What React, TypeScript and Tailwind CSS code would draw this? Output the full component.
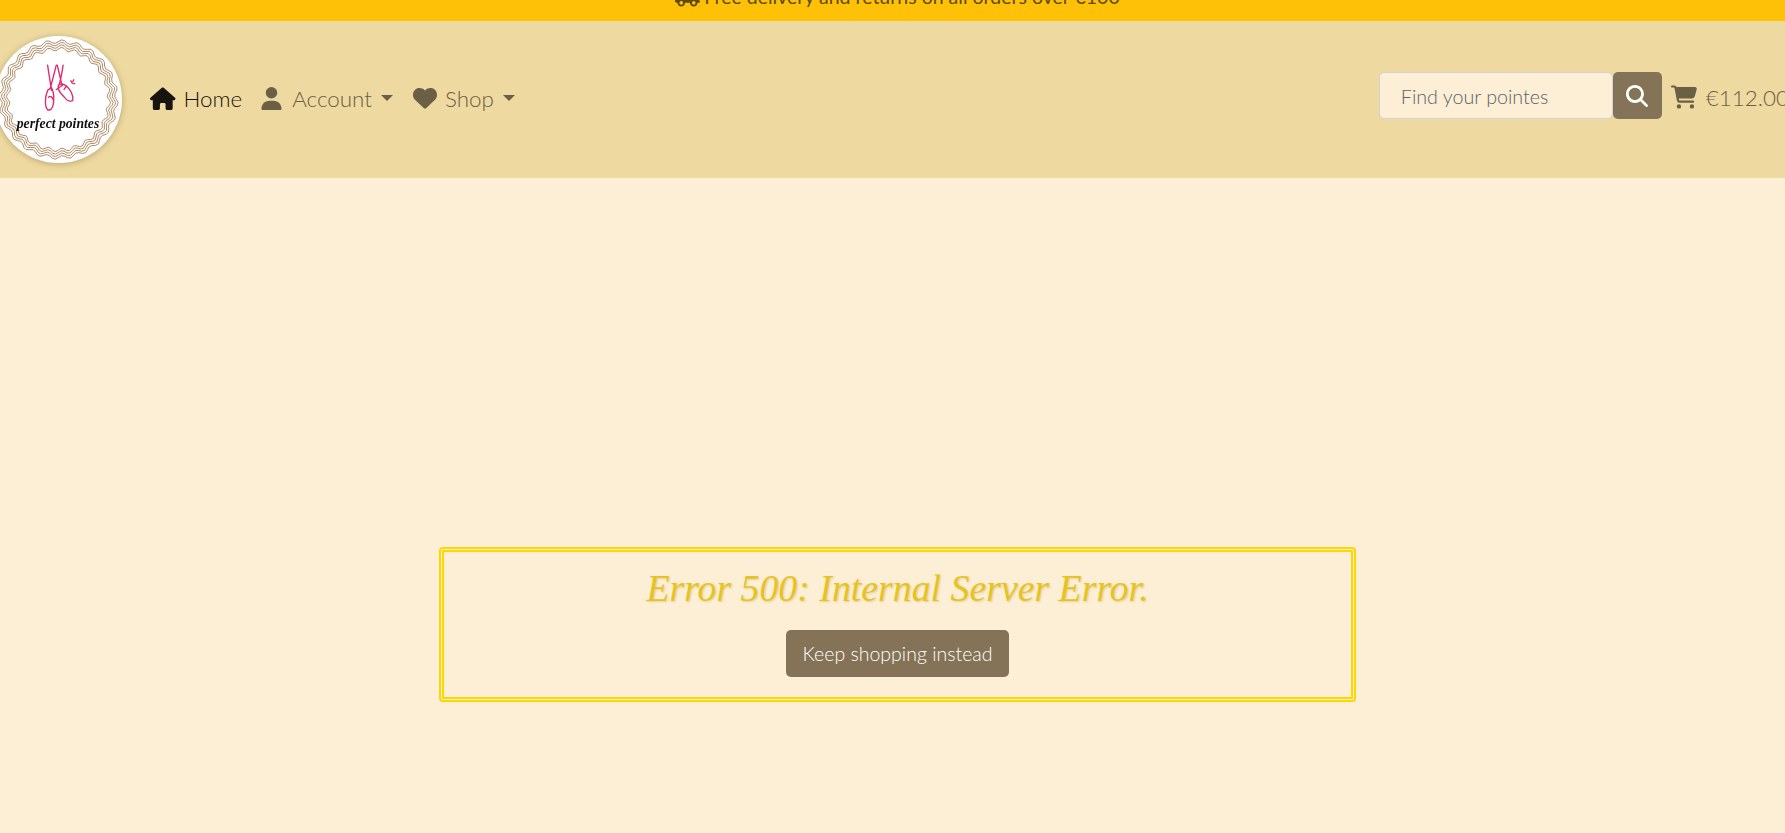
import { FaHouse, FaUser, FaHeart, FaMagnifyingGlass, FaCartShopping, FaTruck } from 'react-icons/fa6';

function Caret() {
  return <span className="ml-[9px] inline-block h-0 w-0 border-x-[6.5px] border-t-[6.5px] border-x-transparent border-t-[#6b5f45]" />;
}

function Logo() {
  // wavy rings around the badge
  const rings = [58, 55.5, 53, 50.5].map((r) => {
    let d = '';
    for (let i = 0; i <= 360; i += 3) {
      const a = (i * Math.PI) / 180;
      const rr = r + 1.8 * Math.sin(a * 24);
      d += `${i === 0 ? 'M' : 'L'}${(63.5 + rr * Math.cos(a)).toFixed(2)} ${(63.5 + rr * Math.sin(a)).toFixed(2)} `;
    }
    return d + 'Z';
  });

  return (
    <svg width="127" height="127" viewBox="0 0 127 127" className="shrink-0 drop-shadow-[0_1px_3px_rgba(90,70,30,0.35)]">
      <circle cx="63.5" cy="63.5" r="63.5" fill="#fff" />
      {rings.map((d, i) => (
        <path key={i} d={d} fill="none" stroke="#9c6c3c" strokeWidth="0.8" />
      ))}
      <g transform="translate(7 3) scale(0.97)" fill="none" stroke="#e0296f" strokeWidth="1.4" strokeLinejoin="round" strokeLinecap="round">
        <path d="M47 27 L51 53 M56 27 L50 50" />
        <path d="M47 53 C44 60 44 70 47 73 C50 74 52 72 53 67 C54 60 53 54 51 50 Z" />
        <path d="M48 60 C50 58 52 60 53 63" />
        <path d="M57 27 C59 36 61 44 62 48 M63 27 C62 34 61 40 59 47" />
        <path d="M58 48 C57 54 62 57 66 62 C68 64 72 65 73 63 C74 60 71 53 68 50 C65 47 61 45 58 48 Z" />
        <path d="M62 48 L56 52 M64 52 L66 49" />
        <path d="M71 43 L72 45 M74 42 L73 44 M75 46 L73 46" />
      </g>
      <text x="63" y="92" textAnchor="middle" fontFamily="'Liberation Serif', serif" fontStyle="italic" fontWeight="700" fontSize="13.7" fill="#111">
        perfect pointes
      </text>
    </svg>
  );
}

export default function App() {
  return (
    <div className="min-h-[833px] w-full overflow-hidden bg-[#fcefd5] font-['Lato','Open_Sans',sans-serif] font-light text-[#212529]">
      <div className="flex h-[21px] items-end justify-center overflow-hidden bg-[#ffc107] pl-[10px] text-[19.5px] font-normal leading-[29px] text-[#5c4a06]">
        <div className="flex h-[29px] shrink-0 -translate-y-[10px] items-center">
          <FaTruck className="mr-[4px] text-[25px]" />
          <span>Free delivery and returns on all orders over €100</span>
        </div>
      </div>

      <header className="flex h-[157px] items-center bg-[#eed9a0]">
        <div className="-ml-[5px] flex items-center">
          <Logo />
        </div>
        <nav className="mb-[2px] ml-[28px] flex items-center text-[22.4px] text-[#6b5f45]">
          <a className="flex items-center text-[#17140e]">
            <FaHouse className="mr-[8px] text-[25.5px]" />
            Home
          </a>
          <a className="ml-[18px] flex items-center">
            <FaUser className="mr-[9px] text-[23px]" />
            Account
            <Caret />
          </a>
          <a className="ml-[20px] flex items-center">
            <FaHeart className="mr-[8px] text-[24px]" />
            Shop
            <Caret />
          </a>
        </nav>

        <div className="-mr-[4px] mb-[8px] ml-auto flex shrink-0 items-center">
          <div className="flex h-[47px] w-[234px] items-center rounded-[5px] border border-[#ced4da] bg-[#fcefd5] pl-[21px] pt-[2px] text-[19.7px] text-[#5a646c]">
            Find your pointes
          </div>
          <button className="flex h-[47px] w-[49px] items-center justify-center rounded-[5px] bg-[#857357] text-white">
            <FaMagnifyingGlass className="text-[22px]" />
          </button>
          <a className="ml-[9px] mt-[4px] flex items-center text-[22.4px] text-[#6b5f45]">
            <FaCartShopping className="mr-[9px] text-[26px]" />
            €112.00
          </a>
        </div>
      </header>

      <main className="flex justify-center pt-[369px] pl-[10px]">
        <div className="flex h-[155px] w-[917px] flex-col items-center rounded-[4px] border-[5px] border-double border-[#ffd700] pt-[12px]">
          <h1 className="font-['Liberation_Serif',serif] text-[37.8px] font-normal italic leading-[48px] text-[#e8c31f] [text-shadow:1px_1px_2px_rgba(180,150,60,0.35)]">
            Error 500: Internal Server Error.
          </h1>
          <button className="mt-[18px] h-[47px] w-[223px] rounded-[5px] bg-[#857357] text-[19.5px] text-white">
            Keep shopping instead
          </button>
        </div>
      </main>
    </div>
  );
}
